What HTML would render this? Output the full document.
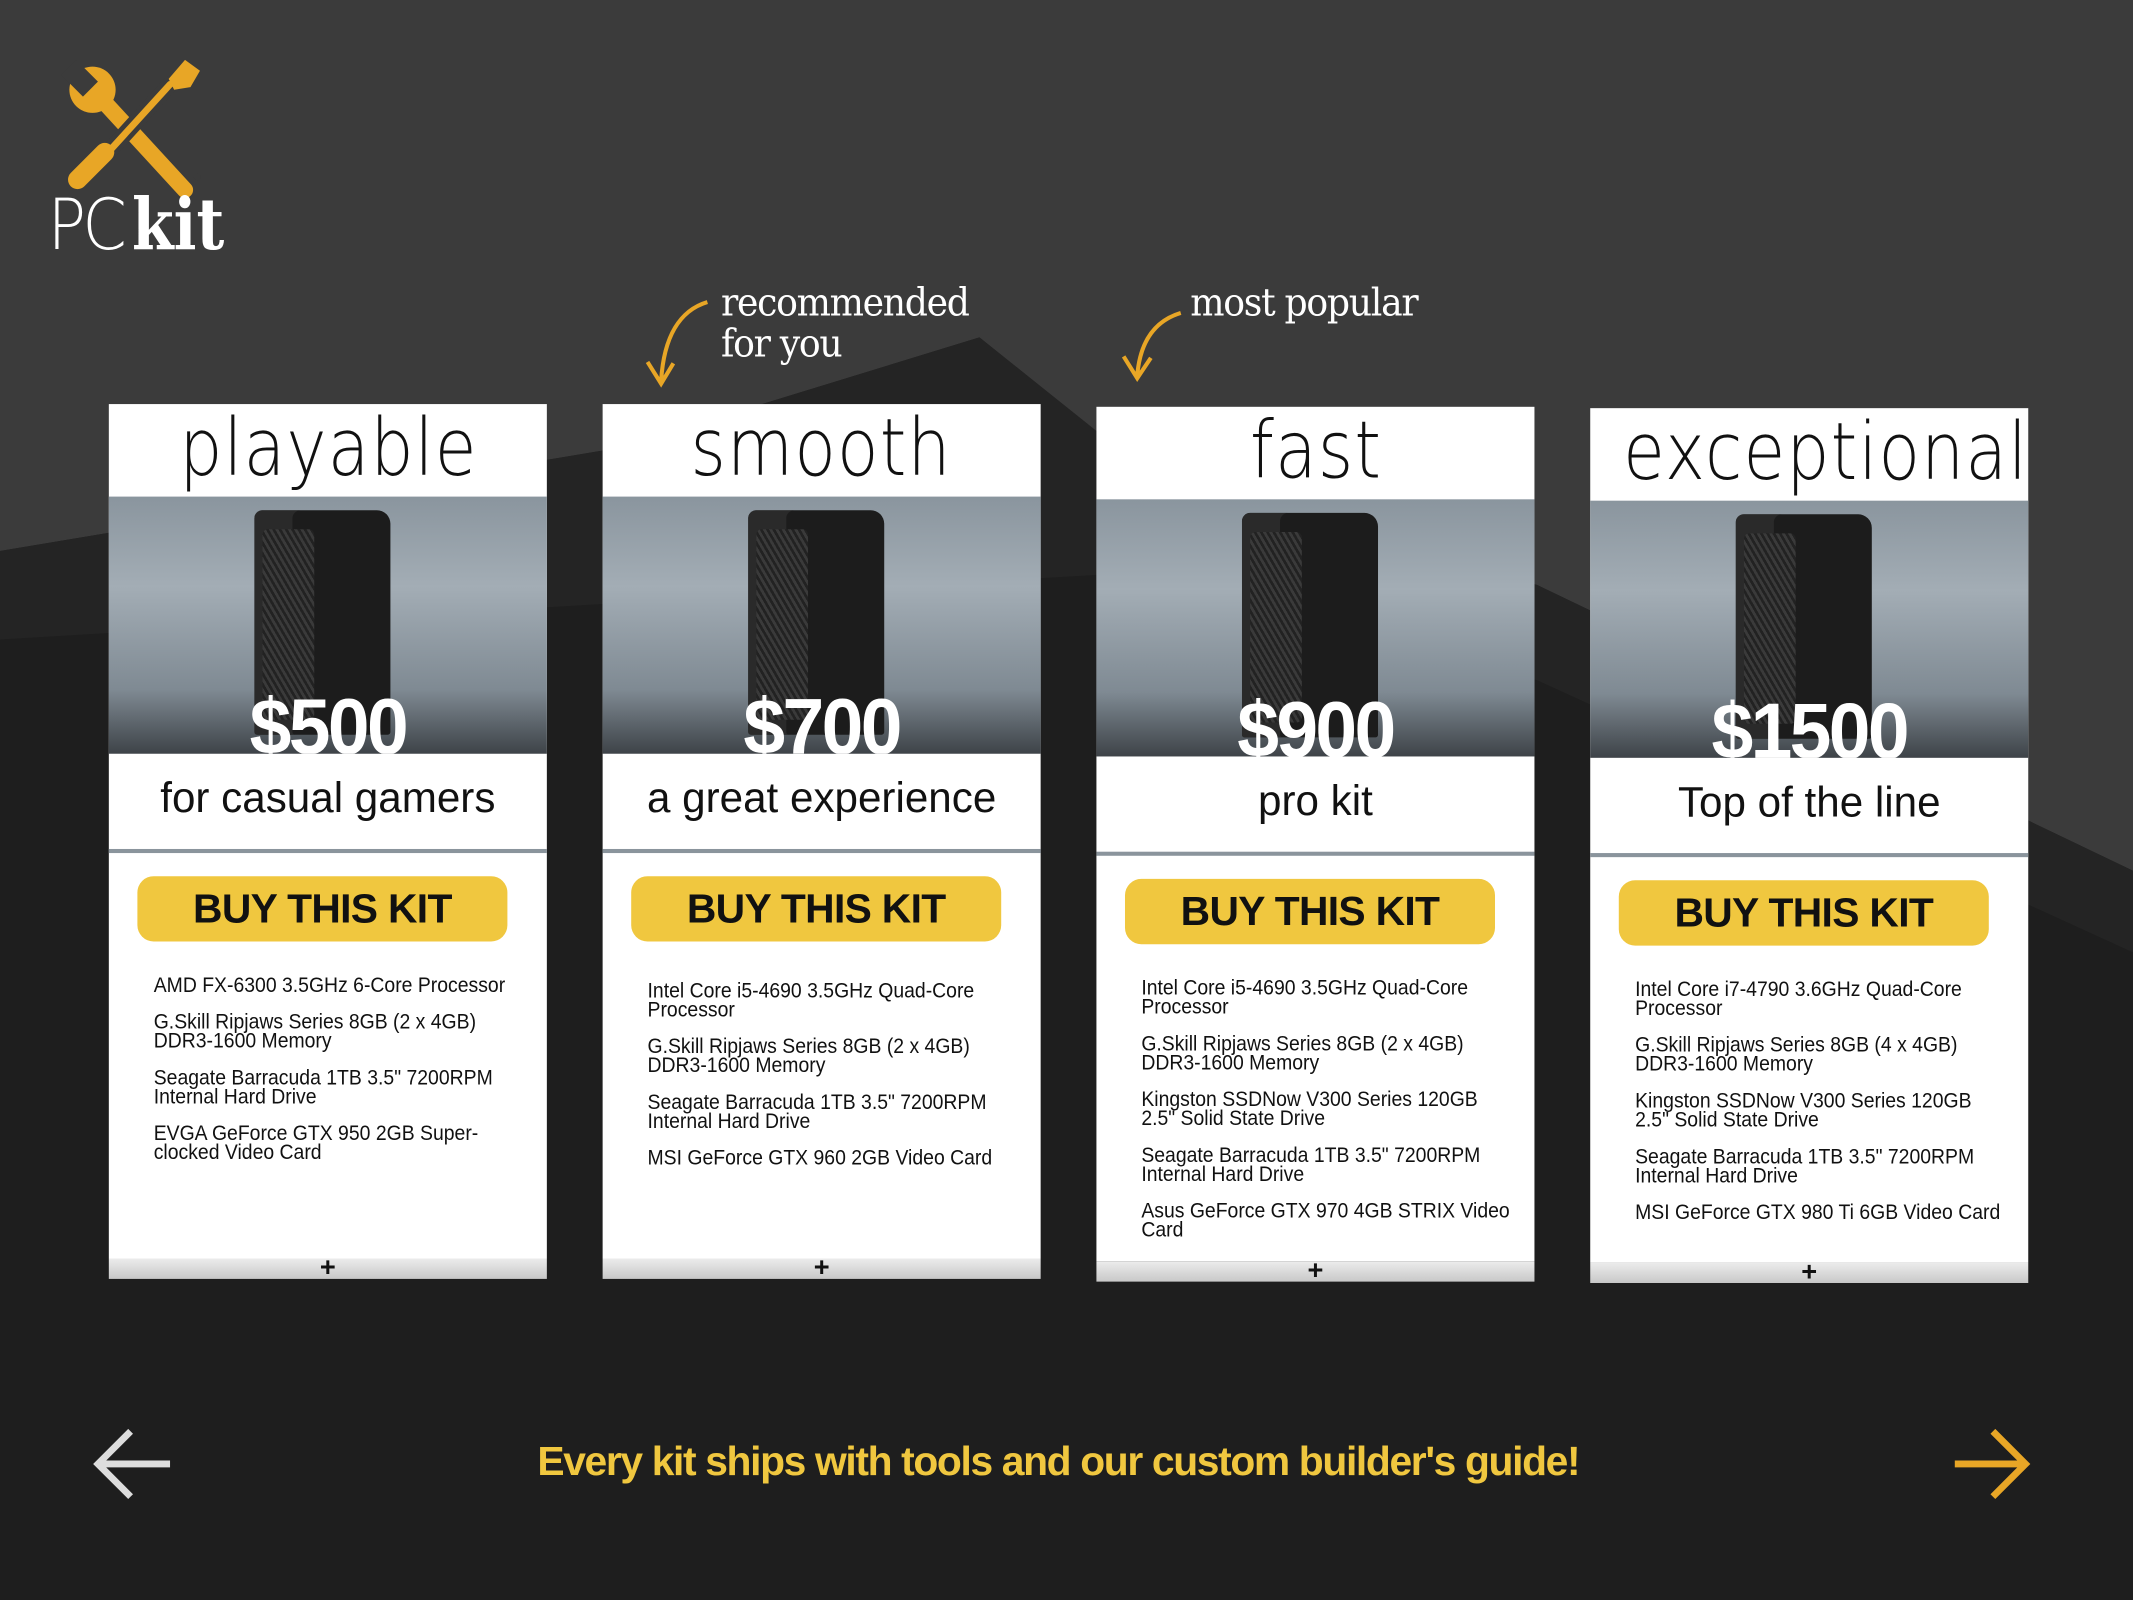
<!DOCTYPE html>
<html><head><meta charset="utf-8"><style>
*{margin:0;padding:0;box-sizing:border-box}
html,body{width:2133px;height:1600px;overflow:hidden;background:#3b3b3b}
#s{position:absolute;left:0;top:0;width:1568px;height:1176px;transform:scale(1.36033,1.36054);transform-origin:0 0;font-family:"Liberation Sans",sans-serif}
.card{position:absolute;width:322px;height:628px;background:#fff}
.hd{height:68px;text-align:center;line-height:64px;overflow:visible;white-space:nowrap}
.hd span{display:inline-block;font-size:58px;color:#111;font-family:"DejaVu Sans",sans-serif;font-weight:200;letter-spacing:1px;transform:scaleX(.86)}
.img{position:relative;height:189px;background:linear-gradient(180deg,#8a959e 0%,#a3adb5 35%,#7f8a93 75%,#3e4348 100%);overflow:hidden}
.case{position:absolute;left:107px;top:10px;width:100px;height:165px;background:#1c1c1c;border-radius:6px 10px 2px 2px;box-shadow:inset 28px 0 0 #2a2a2a}
.case:before{content:"";position:absolute;left:6px;top:14px;width:38px;height:140px;background:repeating-linear-gradient(60deg,#222 0 2px,#3a3a3a 2px 4px);border-radius:4px}
.price{position:absolute;left:0;right:0;bottom:-14px;text-align:center;color:#fff;font-size:58px;font-weight:bold;letter-spacing:-2px;transform:scaleX(.95)}
.sub{height:73px;text-align:center;font-size:31px;line-height:66px;color:#111;border-bottom:3px solid #8a949c}
.btn{margin:17px 0 0 21px;width:272px;height:48px;background:#f0c73f;border-radius:12px;text-align:center;font-size:30px;font-weight:bold;line-height:50px;color:#111;letter-spacing:-.5px}
ul{list-style:none;margin:26px 0 0 33px;font-size:15.5px;line-height:14px;color:#111;width:270px}
li{margin-bottom:13px;transform:scaleX(.92);transform-origin:0 0;width:300px}
.bar{position:absolute;left:0;right:0;bottom:-15px;height:15px;background:linear-gradient(#ececec,#c8c8c8);text-align:center;font-weight:bold;font-size:20px;line-height:14px;color:#111}
.note{position:absolute;color:#fff;font-family:"DejaVu Serif","Liberation Serif",serif;font-size:28px;line-height:30px;letter-spacing:-1px;transform:scaleX(.95);transform-origin:0 0}
</style></head><body><div id="s">
<svg width="1568" height="1176" style="position:absolute;left:0;top:0">
<polygon points="0,405 456,329 720,248 850,352 1130,430 1568,640 1568,1176 0,1176" fill="#1e1e1e"/>
<polygon points="0,405 456,329 720,248 850,352 1130,430 1568,640 1568,700 1130,500 850,420 0,470" fill="#242424"/>
<g stroke-linecap="round" fill="none">
<line x1="72" y1="70" x2="145" y2="130" stroke="#e8a626" stroke-width="12" transform="rotate(8 72 70)"/>
<line x1="125" y1="62" x2="74" y2="118" stroke="#3b3b3b" stroke-width="12"/>
<line x1="125" y1="62" x2="74" y2="118" stroke="#e8a626" stroke-width="5"/>
<line x1="77" y1="112" x2="57" y2="132" stroke="#e8a626" stroke-width="14"/>
</g>
<circle cx="68" cy="66" r="17" fill="#e8a626"/>
<polygon points="56,44 45,55 61,71 72,60" fill="#3b3b3b"/>
<polygon points="136,44 147,52 140,64 128,66 124,58" fill="#e8a626"/>
<circle cx="145" cy="130" r="2.5" fill="#3b3b3b"/>
<path d="M520 222c-20 6-32 25-34 58M476 266l10 16 9-15" stroke="#e8a626" stroke-width="3" fill="none"/>
<path d="M868 230c-20 6-30 22-32 46M826 262l10 16 10-15" stroke="#e8a626" stroke-width="3" fill="none"/>
<path d="M75 1076h50M96 1052l-24 24 24 24" stroke="#ddd" stroke-width="5" fill="none"/>
<path d="M1437 1076h50M1465 1052l24 24-24 24" stroke="#e8a626" stroke-width="5" fill="none"/>
</svg>
<div style="position:absolute;left:35px;top:138px;color:#fff;font-size:52px;line-height:56px;white-space:nowrap"><span style="font-family:'DejaVu Sans',sans-serif;font-weight:200;letter-spacing:-3px;display:inline-block;transform:scaleX(.9);transform-origin:0 0;width:62px">PC</span><span style="font-family:'DejaVu Serif',serif;font-weight:bold;display:inline-block;transform:scaleX(.85);transform-origin:0 0">kit</span></div>
<div class="note" style="left:530px;top:208px">recommended<br>for you</div>
<div class="note" style="left:875px;top:208px">most popular</div>

<div class="card" style="left:80px;top:297px"><div class="hd"><span>playable</span></div><div class="img"><div class="case"></div><div class="price">$500</div></div><div class="sub">for casual gamers</div><div class="btn">BUY THIS KIT</div>
<ul><li>AMD FX-6300 3.5GHz 6-Core Processor</li><li>G.Skill Ripjaws Series 8GB (2 x 4GB) DDR3-1600 Memory</li><li>Seagate Barracuda 1TB 3.5" 7200RPM Internal Hard Drive</li><li>EVGA GeForce GTX 950 2GB Super-clocked Video Card</li></ul><div class="bar">+</div></div>

<div class="card" style="left:443px;top:297px"><div class="hd"><span>smooth</span></div><div class="img"><div class="case"></div><div class="price">$700</div></div><div class="sub">a great experience</div><div class="btn">BUY THIS KIT</div>
<ul style="margin-top:30px"><li>Intel Core i5-4690 3.5GHz Quad-Core Processor</li><li>G.Skill Ripjaws Series 8GB (2 x 4GB) DDR3-1600 Memory</li><li>Seagate Barracuda 1TB 3.5" 7200RPM Internal Hard Drive</li><li>MSI GeForce GTX 960 2GB Video Card</li></ul><div class="bar">+</div></div>

<div class="card" style="left:806px;top:299px"><div class="hd"><span>fast</span></div><div class="img"><div class="case"></div><div class="price">$900</div></div><div class="sub">pro kit</div><div class="btn">BUY THIS KIT</div>
<ul><li>Intel Core i5-4690 3.5GHz Quad-Core Processor</li><li>G.Skill Ripjaws Series 8GB (2 x 4GB) DDR3-1600 Memory</li><li>Kingston SSDNow V300 Series 120GB 2.5" Solid State Drive</li><li>Seagate Barracuda 1TB 3.5" 7200RPM Internal Hard Drive</li><li>Asus GeForce GTX 970 4GB STRIX Video Card</li></ul><div class="bar">+</div></div>

<div class="card" style="left:1169px;top:300px"><div class="hd"><span>exceptional</span></div><div class="img"><div class="case"></div><div class="price">$1500</div></div><div class="sub">Top of the line</div><div class="btn">BUY THIS KIT</div>
<ul><li>Intel Core i7-4790 3.6GHz Quad-Core Processor</li><li>G.Skill Ripjaws Series 8GB (4 x 4GB) DDR3-1600 Memory</li><li>Kingston SSDNow V300 Series 120GB 2.5" Solid State Drive</li><li>Seagate Barracuda 1TB 3.5" 7200RPM Internal Hard Drive</li><li>MSI GeForce GTX 980 Ti 6GB Video Card</li></ul><div class="bar">+</div></div>

<div style="position:absolute;left:395px;top:1058px;width:780px;color:#f0c73f;font-size:30px;font-weight:bold;letter-spacing:-1px;white-space:nowrap">Every kit ships with tools and our custom builder's guide!</div>
</div></body></html>
